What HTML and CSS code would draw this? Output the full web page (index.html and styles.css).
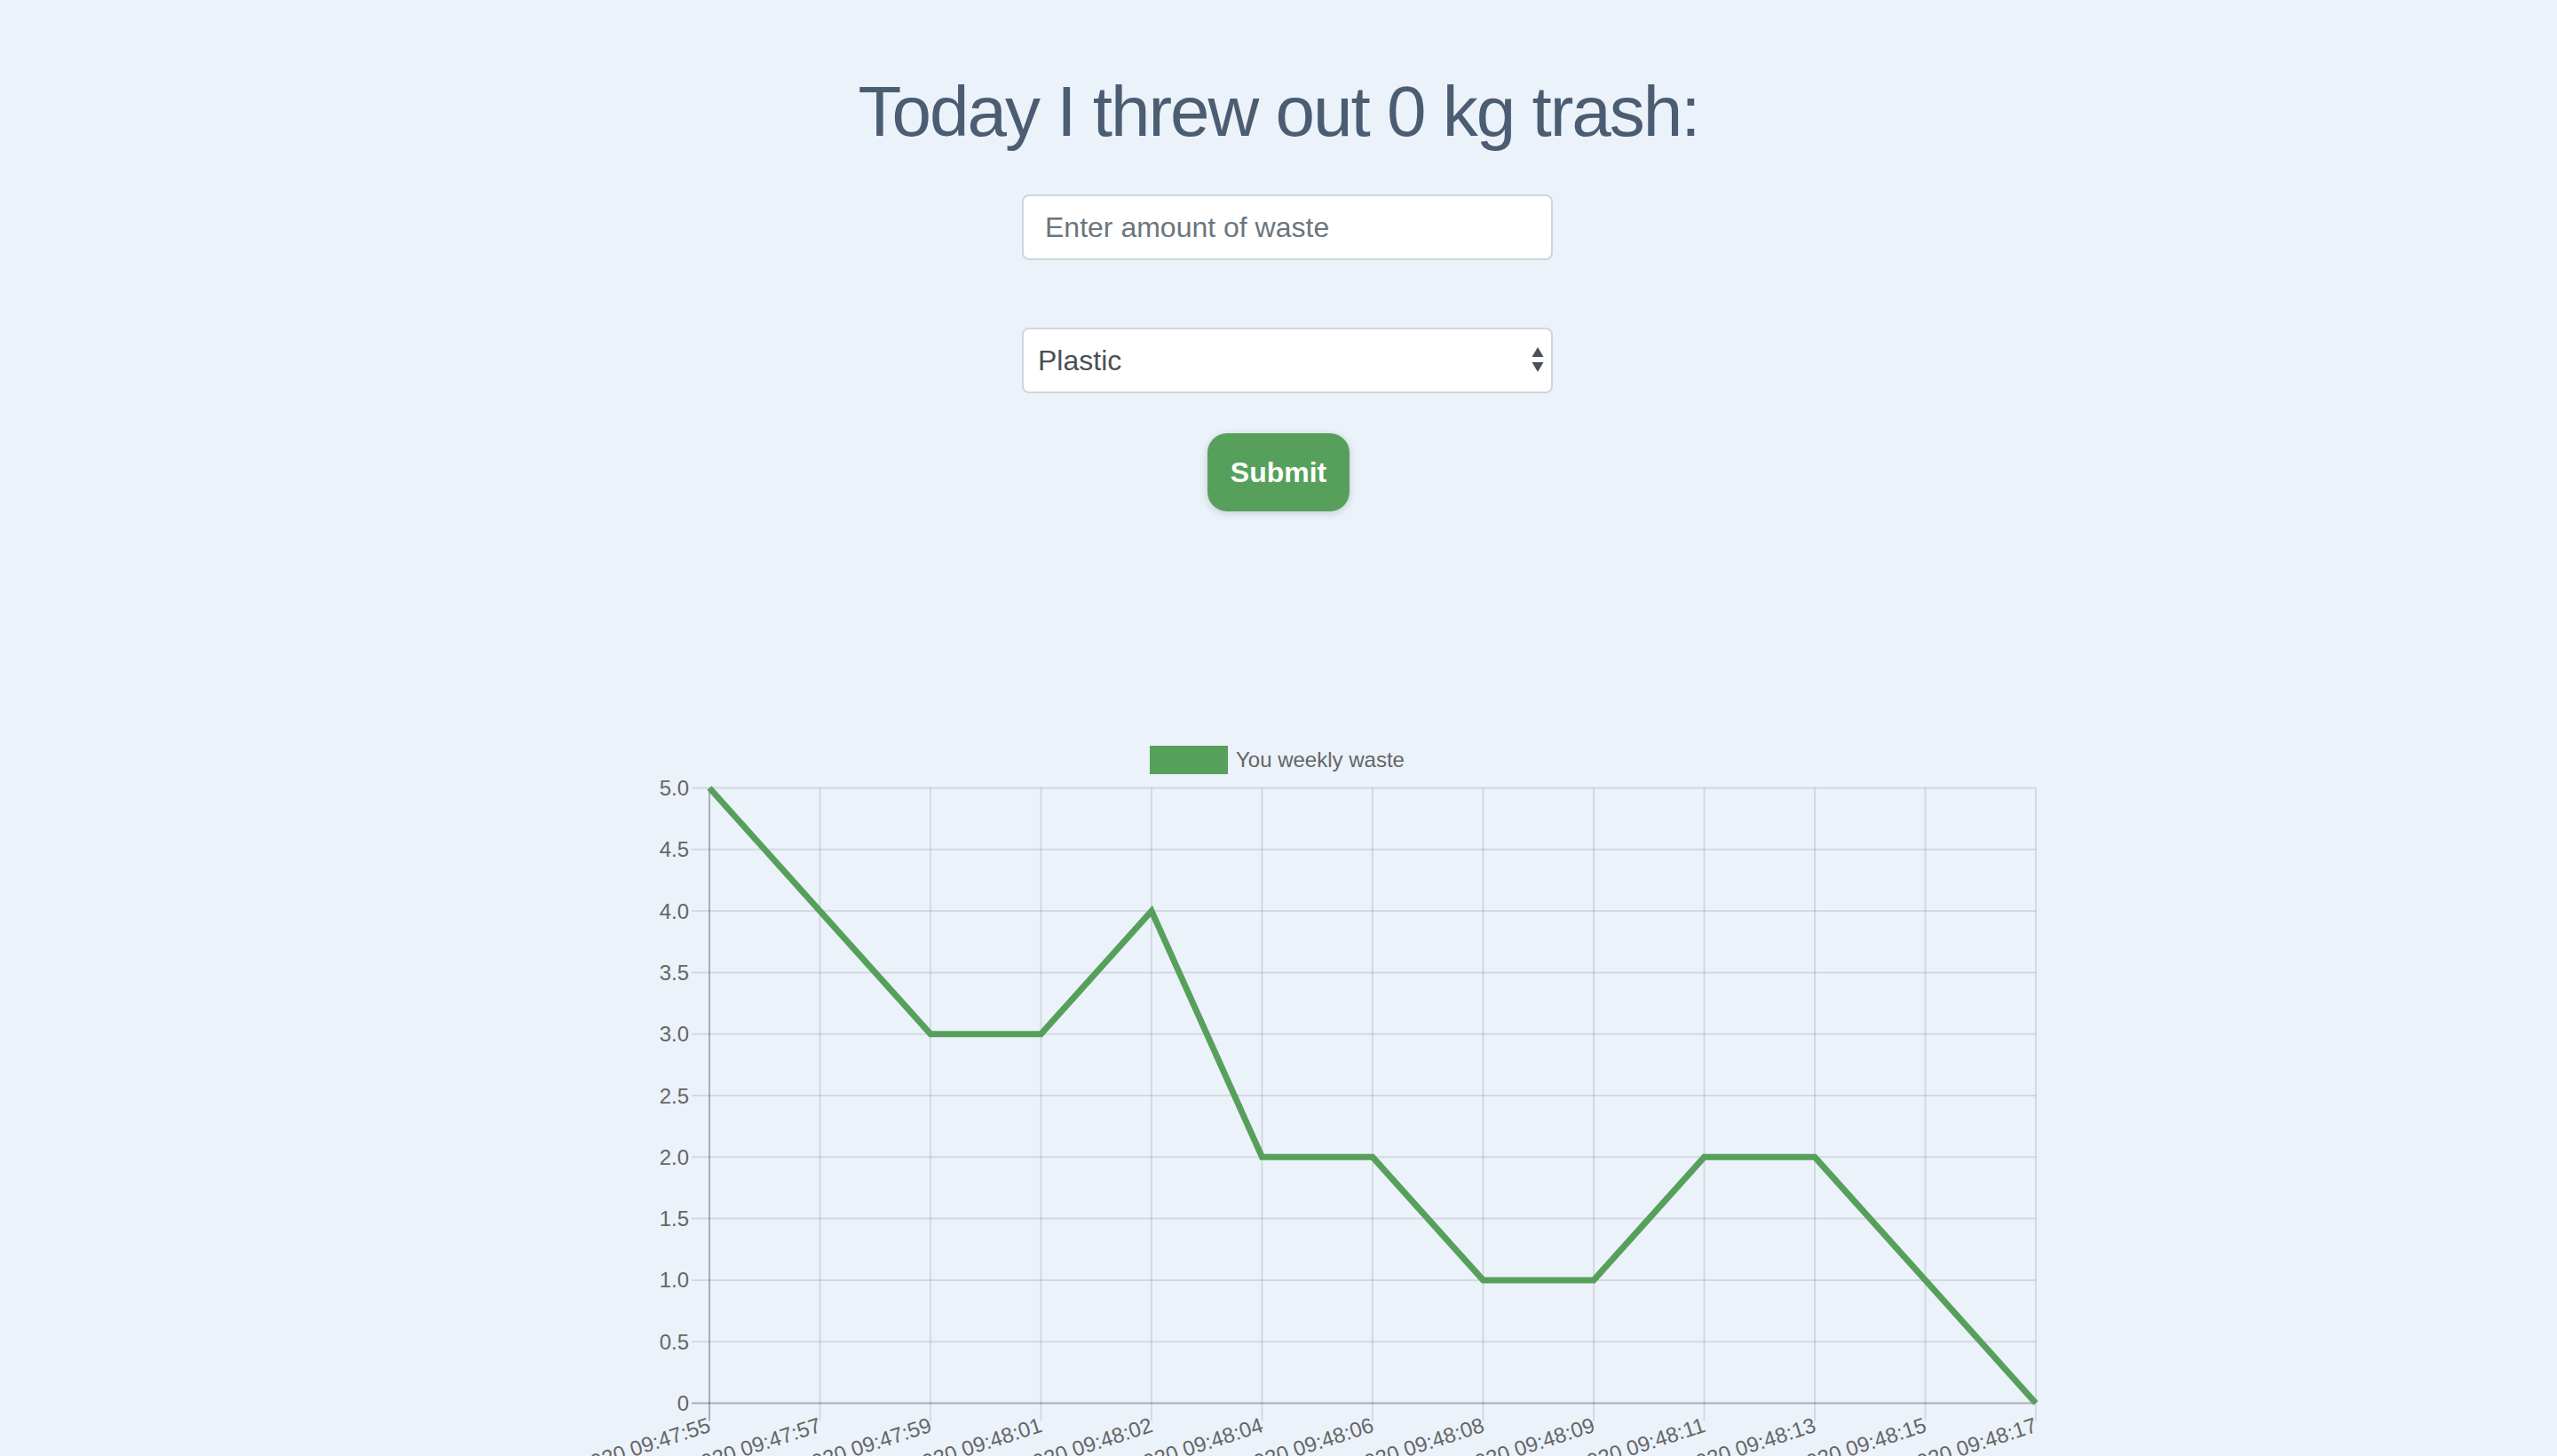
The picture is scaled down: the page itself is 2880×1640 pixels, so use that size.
FILE: index.html
```html
<!DOCTYPE html>
<html lang="en">
<head>
<meta charset="utf-8">
<title>Waste tracker</title>
<link rel="stylesheet" href="styles.css">
</head>
<body>
<main class="page">
  <h1 class="title">Today I threw out 0 kg trash:</h1>
  <form class="waste-form">
    <input class="field" type="text" placeholder="Enter amount of waste">
    <div class="select-wrap">
      <select class="field select">
        <option>Plastic</option>
        <option>Paper</option>
        <option>Glass</option>
        <option>Organic</option>
      </select>
      <svg class="select-arrows" width="14" height="30" viewBox="0 0 14 30" aria-hidden="true">
        <polygon points="0.5,11 13.5,11 7,0" />
        <polygon points="0.5,17 13.5,17 7,28" />
      </svg>
    </div>
    <button class="submit" type="button">Submit</button>
  </form>

  <svg class="chart" width="1760" height="820" viewBox="0 0 1760 820">
    <g class="legend">
      <rect x="735" y="20" width="88" height="32" class="legend-box"/>
      <text x="832" y="44" class="legend-text">You weekly waste</text>
    </g>
    <g class="grid">
      <line x1="219" y1="67.5" x2="1733" y2="67.5"/>
      <line x1="219" y1="136.8" x2="1733" y2="136.8"/>
      <line x1="219" y1="206.1" x2="1733" y2="206.1"/>
      <line x1="219" y1="275.4" x2="1733" y2="275.4"/>
      <line x1="219" y1="344.7" x2="1733" y2="344.7"/>
      <line x1="219" y1="414" x2="1733" y2="414"/>
      <line x1="219" y1="483.3" x2="1733" y2="483.3"/>
      <line x1="219" y1="552.6" x2="1733" y2="552.6"/>
      <line x1="219" y1="621.9" x2="1733" y2="621.9"/>
      <line x1="219" y1="691.2" x2="1733" y2="691.2"/>
      <line x1="363.5" y1="67.5" x2="363.5" y2="780.5"/>
      <line x1="488" y1="67.5" x2="488" y2="780.5"/>
      <line x1="612.5" y1="67.5" x2="612.5" y2="780.5"/>
      <line x1="737" y1="67.5" x2="737" y2="780.5"/>
      <line x1="861.5" y1="67.5" x2="861.5" y2="780.5"/>
      <line x1="986" y1="67.5" x2="986" y2="780.5"/>
      <line x1="1110.5" y1="67.5" x2="1110.5" y2="780.5"/>
      <line x1="1235" y1="67.5" x2="1235" y2="780.5"/>
      <line x1="1359.5" y1="67.5" x2="1359.5" y2="780.5"/>
      <line x1="1484" y1="67.5" x2="1484" y2="780.5"/>
      <line x1="1608.5" y1="67.5" x2="1608.5" y2="780.5"/>
      <line x1="1733" y1="67.5" x2="1733" y2="780.5"/>
    </g>
    <g class="axis">
      <line x1="219" y1="760.5" x2="1733" y2="760.5"/>
      <line x1="239" y1="67.5" x2="239" y2="780.5"/>
    </g>
    <g class="y-labels">
      <text x="216" y="67.5">5.0</text>
      <text x="216" y="136.8">4.5</text>
      <text x="216" y="206.1">4.0</text>
      <text x="216" y="275.4">3.5</text>
      <text x="216" y="344.7">3.0</text>
      <text x="216" y="414">2.5</text>
      <text x="216" y="483.3">2.0</text>
      <text x="216" y="552.6">1.5</text>
      <text x="216" y="621.9">1.0</text>
      <text x="216" y="691.2">0.5</text>
      <text x="216" y="760.5">0</text>
    </g>
    <g class="x-labels">
      <text transform="translate(239 784) rotate(-18)">12/1/2020 09:47:55</text>
      <text transform="translate(363.5 784) rotate(-18)">12/1/2020 09:47:57</text>
      <text transform="translate(488 784) rotate(-18)">12/1/2020 09:47:59</text>
      <text transform="translate(612.5 784) rotate(-18)">12/1/2020 09:48:01</text>
      <text transform="translate(737 784) rotate(-18)">12/1/2020 09:48:02</text>
      <text transform="translate(861.5 784) rotate(-18)">12/1/2020 09:48:04</text>
      <text transform="translate(986 784) rotate(-18)">12/1/2020 09:48:06</text>
      <text transform="translate(1110.5 784) rotate(-18)">12/1/2020 09:48:08</text>
      <text transform="translate(1235 784) rotate(-18)">12/1/2020 09:48:09</text>
      <text transform="translate(1359.5 784) rotate(-18)">12/1/2020 09:48:11</text>
      <text transform="translate(1484 784) rotate(-18)">12/1/2020 09:48:13</text>
      <text transform="translate(1608.5 784) rotate(-18)">12/1/2020 09:48:15</text>
      <text transform="translate(1733 784) rotate(-18)">12/1/2020 09:48:17</text>
    </g>
    <polyline class="data-line" points="239,67.5 363.5,206.1 488,344.7 612.5,344.7 737,206.1 861.5,483.3 986,483.3 1110.5,621.9 1235,621.9 1359.5,483.3 1484,483.3 1608.5,621.9 1733,760.5"/>
  </svg>
</main>
</body>
</html>
```
FILE: styles.css
```css
html, body {
  margin: 0;
  padding: 0;
  height: 100%;
  overflow: hidden;
}

body {
  background: #ebf2fa;
  font-family: "Liberation Sans", Arial, sans-serif;
}

.page {
  display: flex;
  flex-direction: column;
  align-items: center;
}

.title {
  margin: 78px 0 0;
  font-size: 80px;
  line-height: 96px;
  font-weight: 400;
  letter-spacing: -2px;
  color: #4b5d72;
}

.waste-form {
  display: flex;
  flex-direction: column;
  align-items: center;
}

.field {
  box-sizing: border-box;
  width: 598px;
  height: 74px;
  margin-left: 20px;
  border: 2px solid #d0d5dc;
  border-radius: 8px;
  background: #fff;
  font-family: "Liberation Sans", Arial, sans-serif;
  font-size: 32px;
  color: #495057;
  outline: none;
}

input.field {
  margin-top: 45px;
  padding: 0 24px;
}

input.field::placeholder {
  color: #6c757d;
  opacity: 1;
}

.select-wrap {
  position: relative;
  margin-top: 76px;
  margin-left: 20px;
}

.select {
  margin-left: 0;
  padding: 0 16px;
  appearance: none;
  -webkit-appearance: none;
  display: block;
}

.select-arrows {
  position: absolute;
  right: 10px;
  top: 22px;
  fill: #495057;
  pointer-events: none;
}

.submit {
  margin-top: 45px;
  width: 160px;
  height: 88px;
  border: none;
  border-radius: 22px;
  background: #57a05b;
  color: #fff;
  font-family: "Liberation Sans", Arial, sans-serif;
  font-size: 32px;
  font-weight: 700;
  box-shadow: 0 2px 8px rgba(60, 70, 90, 0.22);
  cursor: pointer;
}

.chart {
  display: block;
  margin-top: 244px;
  font-family: "Liberation Sans", Arial, sans-serif;
}

.legend-box {
  fill: #57a05b;
}

.legend-text {
  font-size: 24px;
  fill: #666;
}

.grid line {
  stroke: rgba(0, 0, 0, 0.1);
  stroke-width: 2;
}

.axis line {
  stroke: rgba(0, 0, 0, 0.28);
  stroke-width: 2;
}

.y-labels text {
  font-size: 24px;
  fill: #666;
  text-anchor: end;
  dominant-baseline: central;
}

.x-labels text {
  font-size: 24px;
  fill: #666;
  text-anchor: end;
  dominant-baseline: central;
}

.data-line {
  fill: none;
  stroke: #57a05b;
  stroke-width: 7;
  stroke-linejoin: miter;
}
```
